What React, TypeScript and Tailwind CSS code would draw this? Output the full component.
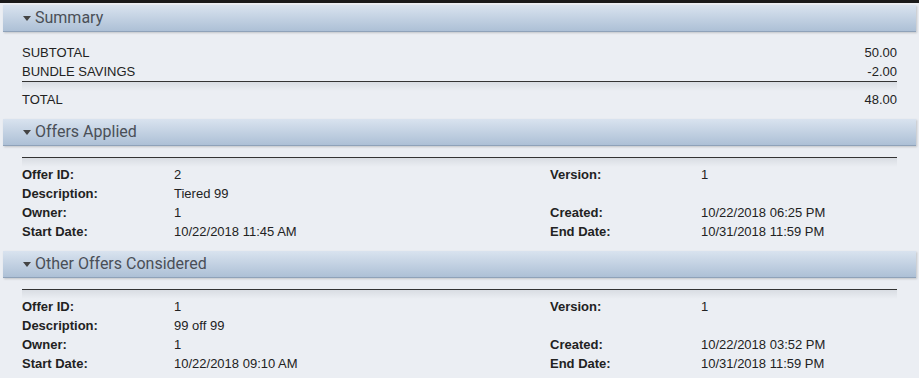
import React from "react";

const Header = ({ title }: { title: string }) => (
  <div className="mx-[3px] h-[27px] flex items-center border-b border-[#8fa2b9] bg-gradient-to-b from-[#d9e3ef] to-[#adc0d6] shadow-[1px_1px_2px_rgba(0,0,0,0.18)]">
    <svg width="8" height="5" viewBox="0 0 8 5" className="ml-[20px] mr-[4px] mt-[1px]">
      <polygon points="0,0 8,0 4,5" fill="#444" />
    </svg>
    <span className="text-[16px] text-[#4a4f57] leading-none" style={{ fontFamily: "Roboto, 'Liberation Sans', sans-serif" }}>
      {title}
    </span>
  </div>
);

const Rule = () => (
  <div className="h-[10px] border-t border-[#333] bg-gradient-to-b from-[#d9dde3] to-transparent" />
);

type Offer = {
  id: string;
  desc: string;
  owner: string;
  start: string;
  version: string;
  created: string;
  end: string;
};

const OfferTable = ({ o }: { o: Offer }) => (
  <div className="grid grid-cols-[152px_376px_151px_1fr] leading-[19px] -mt-[2px]">
    <div className="font-bold">Offer ID:</div>
    <div>{o.id}</div>
    <div className="font-bold">Version:</div>
    <div>{o.version}</div>
    <div className="font-bold">Description:</div>
    <div>{o.desc}</div>
    <div></div>
    <div></div>
    <div className="font-bold">Owner:</div>
    <div>{o.owner}</div>
    <div className="font-bold">Created:</div>
    <div>{o.created}</div>
    <div className="font-bold">Start Date:</div>
    <div>{o.start}</div>
    <div className="font-bold">End Date:</div>
    <div>{o.end}</div>
  </div>
);

export default function App() {
  return (
    <div
      className="w-[919px] h-[378px] overflow-hidden bg-[#ebeef3] text-[13px] text-[#222]"
      style={{ fontFamily: "'Liberation Sans', Arial, sans-serif" }}
    >
      <div className="h-[3px] bg-[#1a1a1a]" />
      <div className="h-[2px]" />
      <Header title="Summary" />
      <div className="pl-[22px] pr-[22px] pt-[11px]">
        <div className="flex justify-between leading-[19px]">
          <span>SUBTOTAL</span>
          <span>50.00</span>
        </div>
        <div className="flex justify-between leading-[19px]">
          <span>BUNDLE SAVINGS</span>
          <span>-2.00</span>
        </div>
        <Rule />
        <div className="flex justify-between leading-[19px] -mt-[1px]">
          <span>TOTAL</span>
          <span>48.00</span>
        </div>
      </div>
      <div className="h-[10px]" />
      <Header title="Offers Applied" />
      <div className="pl-[22px] pr-[22px] pt-[11px]">
        <Rule />
        <OfferTable
          o={{
            id: "2",
            desc: "Tiered 99",
            owner: "1",
            start: "10/22/2018 11:45 AM",
            version: "1",
            created: "10/22/2018 06:25 PM",
            end: "10/31/2018 11:59 PM",
          }}
        />
      </div>
      <div className="h-[10px]" />
      <Header title="Other Offers Considered" />
      <div className="pl-[22px] pr-[22px] pt-[11px]">
        <Rule />
        <OfferTable
          o={{
            id: "1",
            desc: "99 off 99",
            owner: "1",
            start: "10/22/2018 09:10 AM",
            version: "1",
            created: "10/22/2018 03:52 PM",
            end: "10/31/2018 11:59 PM",
          }}
        />
      </div>
    </div>
  );
}
